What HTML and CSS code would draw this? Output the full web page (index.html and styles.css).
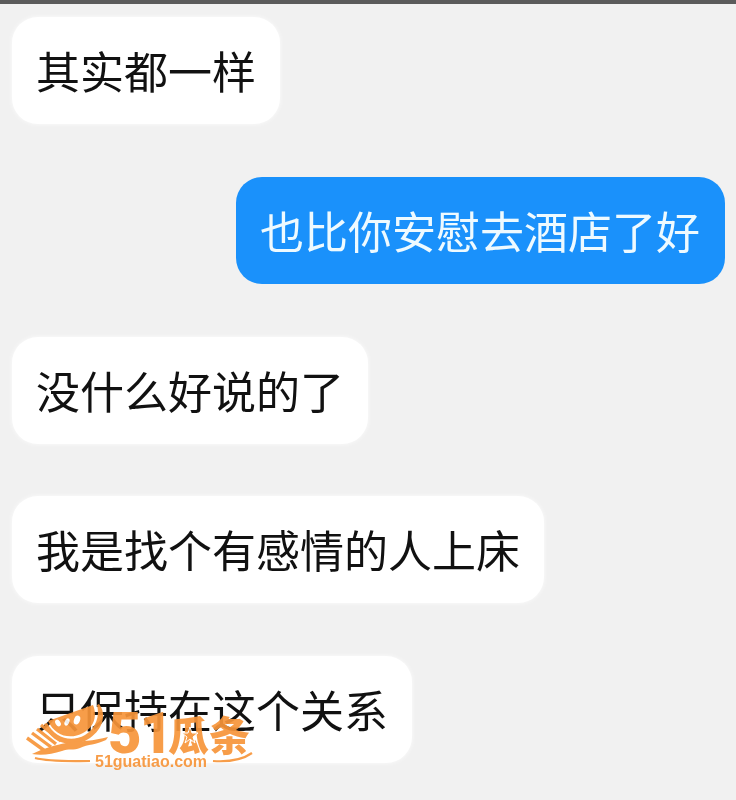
FILE: index.html
```html
<!DOCTYPE html>
<html lang="zh-CN">
<head>
    <meta charset="UTF-8">
    <meta name="viewport" content="width=device-width, initial-scale=1.0">
    <title>聊天记录</title>
    <link rel="stylesheet" href="styles.css">
</head>
<body>
    <div class="chat">
        <div class="bubble">其实都一样</div>
        <div class="bubble mine">也比你安慰去酒店了好</div>
        <div class="bubble">没什么好说的了</div>
        <div class="bubble">我是找个有感情的人上床</div>
        <div class="bubble">只保持在这个关系</div>
    </div>

    <div class="watermark">
        <span class="brand">51</span>
        <span class="brand-cn">瓜条</span>
        <span class="site">51guatiao.com</span>
        <!-- viewBox is in page pixels so the logo parts line up with the reference -->
        <svg class="logo" width="230" height="68" viewBox="26 704 230 68">
            <!-- melon slice -->
            <path d="M44 724 C50 743 72 750 90 738 C103 729 107 714 99 704 L97 705 C100 716 96 728 85 735 C71 743 55 738 47 723 Z" fill="#f7953a"/>
            <path d="M48 721 L93 705 C98 717 93 728 83 733 C70 740 55 736 48 721 Z" fill="#f7953a"/>
            <ellipse cx="58" cy="723" rx="2.4" ry="3.6" fill="#fff" transform="rotate(-35 58 723)"/>
            <ellipse cx="67" cy="722" rx="2.2" ry="3.8" fill="#fff" transform="rotate(25 67 722)"/>
            <ellipse cx="77" cy="720" rx="3" ry="4.6" fill="#fff" transform="rotate(20 77 720)"/>
            <!-- fan of stripes -->
            <path d="M27 738 L45 751 M32 733 L51 747 M37 729 L56 744 M41 725 L61 741" stroke="#f7953a" stroke-width="3.4" fill="none"/>
            <!-- waves -->
            <path d="M32 754 C44 748 56 745 66 743 C80 741 94 741 108 737 L106 740 C96 745 88 744 80 748 C74 751 68 748 62 751 C52 754 42 756 32 754 Z" fill="#f7953a"/>
            <!-- lines each side of the site name -->
            <path d="M35 758 C50 762 70 761 90 761" stroke="#f7953a" stroke-width="2.2" fill="none"/>
            <path d="M213 761 C228 762 242 760 252 753" stroke="#f7953a" stroke-width="2.2" fill="none"/>
            <!-- star inside the first character -->
            <polygon points="190,727 192,733 198,733 193,737 195,743 190,739 185,743 187,737 182,733 188,733" fill="#f7953a" stroke="#fff" stroke-width="1"/>
        </svg>
    </div>
</body>
</html>
```

FILE: styles.css
```css
body {
    margin: 0;
    min-height: 800px;
    position: relative;
    overflow: hidden;
    background: #f1f1f1;
    border-top: 4px solid #5b5b5b;
    box-sizing: border-box;
    font-family: "Noto Sans CJK SC", "Liberation Sans", sans-serif;
}
.chat {
    display: flex;
    flex-direction: column;
    align-items: flex-start;
    gap: 52.75px;
    padding: 13px 11px 0 12px;
    filter: blur(0.4px);
}
.bubble {
    box-sizing: border-box;
    height: 107px;
    padding: 0 24px 1px 24px;
    display: flex;
    align-items: center;
    font-size: 44px;
    color: #111;
    background: #fff;
    border-radius: 26px;
    box-shadow: 0 0 5px rgba(255, 255, 255, 0.8);
}
.mine {
    align-self: flex-end;
    padding-right: 25px;
    color: #eefaff;
    background: #1a91fb;
    box-shadow: none;
}
.watermark {
    position: absolute;
    left: 26px;
    top: 700px;
    width: 230px;
    height: 68px;
    color: #f7953a;
    opacity: 0.92;
}
.logo {
    position: absolute;
    left: 0;
    top: 0;
}
.brand {
    position: absolute;
    left: 82px;
    top: 0;
    font-family: Roboto, "Liberation Sans", sans-serif;
    font-size: 58px;
    line-height: 58px;
    font-weight: 900;
    letter-spacing: -2px;
}
.brand-cn {
    position: absolute;
    left: 142px;
    top: 9px;
    font-size: 41px;
    line-height: 41px;
    font-weight: 900;
}
.site {
    position: absolute;
    left: 69px;
    top: 49px;
    font-family: "Liberation Sans", sans-serif;
    font-size: 16px;
    line-height: 18px;
    font-weight: 700;
}
```
